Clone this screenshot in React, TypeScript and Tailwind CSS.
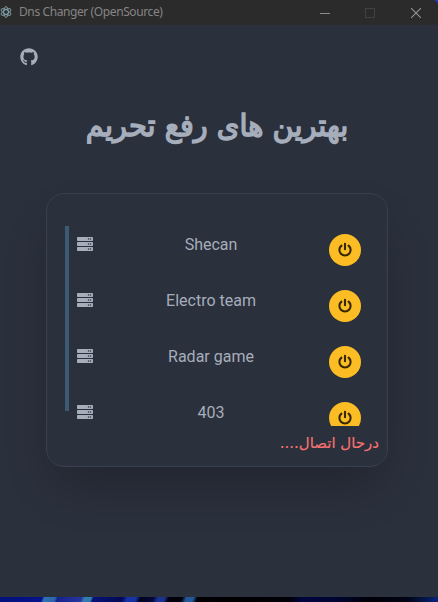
import { FaGithub, FaServer } from "react-icons/fa";

const servers = ["Shecan", "Electro team", "Radar game", "403"];

function TitleBar() {
  return (
    <header className="flex h-[25px] shrink-0 items-center rounded-tr-[5px] bg-[#2b2b2b] text-[#858585]">
      <svg viewBox="0 0 24 24" className="mt-[-1px] size-[12px] text-[#91b3bf]" fill="none" stroke="currentColor" strokeWidth="1.6">
        <ellipse cx="12" cy="12" rx="4.5" ry="11" />
        <ellipse cx="12" cy="12" rx="4.5" ry="11" transform="rotate(60 12 12)" />
        <ellipse cx="12" cy="12" rx="4.5" ry="11" transform="rotate(120 12 12)" />
      </svg>
      <span className="ml-[7px] mt-[-1px] flex-1 whitespace-nowrap font-['Noto_Sans',sans-serif] text-[12px] leading-4 tracking-[-0.4px]">
        Dns Changer (OpenSource)
      </span>
      <svg className="mr-[35px] size-[10px]" viewBox="0 0 10 10" shapeRendering="crispEdges">
        <path d="M0 5.5h10" stroke="#8b8b8b" />
      </svg>
      <svg className="mr-[36px] size-[10px]" viewBox="0 0 10 10" shapeRendering="crispEdges">
        <rect x=".5" y=".5" width="9" height="9" fill="none" stroke="#414141" />
      </svg>
      <svg className="mr-[17px] size-[10px]" viewBox="0 0 10 10">
        <path d="M0 0l10 10M10 0L0 10" stroke="#969696" strokeWidth="1.1" />
      </svg>
    </header>
  );
}

function ServerRow({ name }: { name: string }) {
  return (
    <li className="flex h-14 shrink-0 items-start pt-2">
      <FaServer className="mt-[2px] size-4" />
      <span className="mt-[-1px] flex-1 text-center text-base leading-6">{name}</span>
      <button className="flex size-8 items-center justify-center rounded-full bg-[#fbbd23] text-[#382800]">
        <svg viewBox="0 0 16 16" className="size-4" fill="none" stroke="currentColor" strokeWidth="2.1" strokeLinecap="round">
          <path d="M8 1.9v5.3" />
          <path d="M4.4 3.6a5.6 5.6 0 1 0 7.2 0" />
        </svg>
      </button>
    </li>
  );
}

export default function App() {
  return (
    <div className="flex h-[602px] w-[438px] flex-col overflow-hidden bg-[#1d3fc0] font-[Roboto,'DejaVu_Sans',sans-serif] text-[#a6adbb]">
      <TitleBar />
      <main className="flex min-h-0 flex-1 flex-col bg-[#2a303c]">
        <div className="pl-5 pt-[23px]">
          <FaGithub className="size-[18px]" />
        </div>
        <h1
          dir="rtl"
          className="mt-[36px] h-[48px] scale-x-[0.96] whitespace-nowrap pr-[4px] text-center font-['DejaVu_Sans',sans-serif] text-[30px] font-normal leading-[48px] [-webkit-text-stroke:1.5px_#a6adbb]"
        >
          بهترین های رفع تحریم
        </h1>
        <section className="ml-[46px] mt-[43px] flex h-[274px] w-[342px] flex-col rounded-[18px] border border-[#384150] bg-[#2a303c] pt-8 shadow-2xl">
          <div className="ml-[18px] flex h-[200px] w-[296px] shrink-0 items-start overflow-hidden">
            <div className="h-[185px] w-1 shrink-0 bg-[#3d5a75]" />
            <ul className="ml-2 flex w-[284px] flex-col">
              {servers.map((name) => (
                <ServerRow key={name} name={name} />
              ))}
            </ul>
          </div>
          <p
            dir="rtl"
            className="mt-[5px] whitespace-nowrap pr-2 font-['DejaVu_Sans',sans-serif] text-[15px] leading-6 text-[#f87272] [-webkit-text-stroke:0.15px_#f87272]"
          >
            درحال اتصال....
          </p>
        </section>
      </main>
      <footer className="h-[5px] shrink-0 bg-[linear-gradient(110deg,#00127a_0%,#06128b_9.6%,#2d73b5_10.2%,#2e64ad_12.6%,#17228c_13.2%,#2635a0_18.6%,#347caf_19.3%,#347caf_20.8%,#061477_21.3%,#020955_28%,#1732a6_29%,#1732a6_31%,#01031e_32%,#03083a_35%,#1b3292_36%,#1b3292_37.5%,#00000b_38.5%,#00000b_41.5%,#245999_42.5%,#245999_44%,#000000_45%,#000008_49%,#000000_50%,#000008_66%,#000542_69%,#00052d_78%,#000006_84%,#000515_93%,#09247c_100%)]" />
    </div>
  );
}
